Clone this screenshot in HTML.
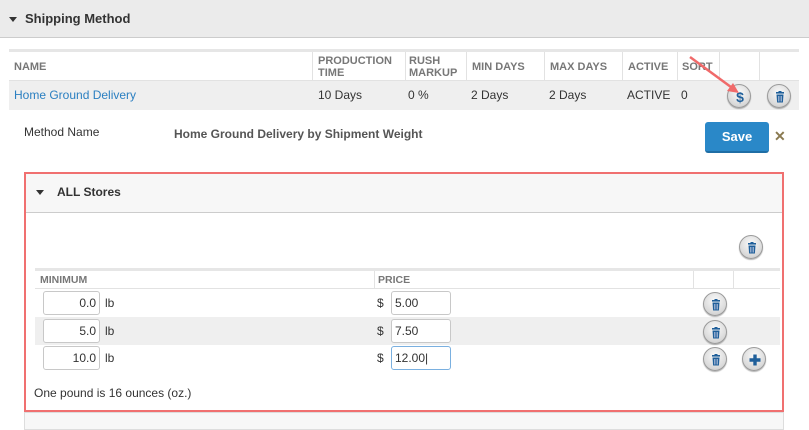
<!DOCTYPE html>
<html><head><meta charset="utf-8"><style>
*{margin:0;padding:0;box-sizing:border-box}
body{width:809px;height:430px;overflow:hidden;background:#fff;font-family:"Liberation Sans",Arial,sans-serif;font-size:12px;color:#333;position:relative}
.a{position:absolute;white-space:nowrap}
.th{font-weight:bold;font-size:11px;color:#777;line-height:12px}
.vl{position:absolute;width:1px;background:#e2e2e2}
.btn{position:absolute;width:24px;height:24px;border-radius:50%;background:radial-gradient(circle at 50% 35%,#fafafa,#d8d8d8 70%,#bcbcbc);border:1px solid #9a9a9a;box-shadow:0 1px 1px rgba(0,0,0,.3)}
.btn svg{position:absolute;left:5px;top:5px}
.inp{position:absolute;height:24px;border:1px solid #c8c8c8;border-radius:3px;background:#fff;font-size:12px;line-height:22px;padding:0 3px;font-family:"Liberation Sans",sans-serif;color:#333}
.tri{position:absolute;width:0;height:0;border-left:4px solid transparent;border-right:4px solid transparent;border-top:5px solid #333}
</style></head><body>
<div class="a" style="left:0;top:0;width:809px;height:38px;background:#ebebeb;border-bottom:1px solid #ccc"></div>
<div class="tri" style="left:9px;top:17px"></div>
<div class="a" style="left:25px;top:11px;font-size:13px;font-weight:bold;color:#333">Shipping Method</div>

<div class="a" style="left:9px;top:49px;width:790px;height:3px;background:#e6e6e6"></div>
<div class="a" style="left:9px;top:80px;width:790px;height:1px;background:#e2e2e2"></div>
<div class="a" style="left:9px;top:81px;width:790px;height:29px;background:#efefef"></div>
<div class="vl" style="left:312px;top:52px;height:29px"></div>
<div class="vl" style="left:405px;top:52px;height:29px"></div>
<div class="vl" style="left:466px;top:52px;height:29px"></div>
<div class="vl" style="left:544px;top:52px;height:29px"></div>
<div class="vl" style="left:622px;top:52px;height:29px"></div>
<div class="vl" style="left:677px;top:52px;height:29px"></div>
<div class="vl" style="left:719px;top:52px;height:29px"></div>
<div class="vl" style="left:759px;top:52px;height:29px"></div>
<div class="a th" style="left:14px;top:61px">NAME</div>
<div class="a th" style="left:318px;top:55px">PRODUCTION<br>TIME</div>
<div class="a th" style="left:409px;top:55px">RUSH<br>MARKUP</div>
<div class="a th" style="left:472px;top:61px">MIN DAYS</div>
<div class="a th" style="left:550px;top:61px">MAX DAYS</div>
<div class="a th" style="left:628px;top:61px">ACTIVE</div>
<div class="a th" style="left:682px;top:61px">SORT</div>
<div class="a" style="left:14px;top:88px;color:#2a7fc1">Home Ground Delivery</div>
<div class="a" style="left:318px;top:88px">10 Days</div>
<div class="a" style="left:408px;top:88px">0 %</div>
<div class="a" style="left:471px;top:88px">2 Days</div>
<div class="a" style="left:549px;top:88px">2 Days</div>
<div class="a" style="left:627px;top:88px">ACTIVE</div>
<div class="a" style="left:681px;top:88px">0</div>
<div class="btn" style="left:727px;top:84px"><svg width="14" height="14"><text x="7" y="12" text-anchor="middle" font-family="Liberation Sans" font-weight="bold" font-size="14" fill="#1f5f9a">$</text></svg></div>
<div class="btn" style="left:767px;top:84px"><svg width="14" height="14" viewBox="0 0 14 14"><rect x="3" y="2" width="8" height="1.6" fill="#1f5f9a"/><rect x="5.5" y="1" width="3" height="1.5" fill="#1f5f9a"/><path d="M3.5 4.5h7l-.6 8h-5.8z" fill="#1f5f9a"/><path d="M5.6 6v5.5M7 6v5.5M8.4 6v5.5" stroke="#dde" stroke-width=".6"/></svg></div>
<svg class="a" style="left:685px;top:52px" width="60" height="50"><line x1="5" y1="5" x2="50" y2="38" stroke="#f06a6a" stroke-width="2.5"/><path d="M54 41l-12-2 6-8z" fill="#f06a6a"/></svg>

<div class="a" style="left:24px;top:125px">Method Name</div>
<div class="a" style="left:174px;top:127px;font-weight:bold;color:#555">Home Ground Delivery by Shipment Weight</div>
<div class="a" style="left:705px;top:122px;width:64px;height:31px;background:#2a88c8;border-radius:3px;border-bottom:2px solid #1f6ea5;color:#fff;font-weight:bold;font-size:13px;text-align:center;line-height:29px">Save</div>
<div class="a" style="left:774px;top:128px;color:#8a7a50;font-weight:bold;font-size:14px">✕</div>

<div class="a" style="left:24px;top:412px;width:760px;height:18px;background:#f7f7f7;border:1px solid #ddd"></div>
<div class="a" style="left:24px;top:172px;width:760px;height:240px;border:2px solid #f07070;background:#fff"></div>
<div class="a" style="left:26px;top:174px;width:756px;height:39px;background:#f7f7f7;border-bottom:1px solid #ccc"></div>
<div class="tri" style="left:36px;top:190px"></div>
<div class="a" style="left:57px;top:185px;font-weight:bold;font-size:12px">ALL Stores</div>
<div class="btn" style="left:739px;top:235px"><svg width="14" height="14" viewBox="0 0 14 14"><rect x="3" y="2" width="8" height="1.6" fill="#1f5f9a"/><rect x="5.5" y="1" width="3" height="1.5" fill="#1f5f9a"/><path d="M3.5 4.5h7l-.6 8h-5.8z" fill="#1f5f9a"/><path d="M5.6 6v5.5M7 6v5.5M8.4 6v5.5" stroke="#dde" stroke-width=".6"/></svg></div>

<div class="a" style="left:35px;top:268px;width:745px;height:3px;background:#e6e6e6"></div>
<div class="a" style="left:35px;top:288px;width:745px;height:1px;background:#e2e2e2"></div>
<div class="vl" style="left:374px;top:271px;height:17px"></div>
<div class="vl" style="left:693px;top:271px;height:17px"></div>
<div class="vl" style="left:733px;top:271px;height:17px"></div>
<div class="a th" style="left:40px;top:274px;font-size:10.5px">MINIMUM</div>
<div class="a th" style="left:378px;top:274px;font-size:10.5px">PRICE</div>
<div class="a" style="left:35px;top:317px;width:745px;height:28px;background:#efefef"></div>

<div class="inp" style="left:43px;top:291px;width:57px;text-align:right">0.0</div>
<div class="a" style="left:105px;top:296px">lb</div>
<div class="a" style="left:377px;top:296px">$</div>
<div class="inp" style="left:391px;top:291px;width:60px">5.00</div>
<div class="btn" style="left:703px;top:292px"><svg width="14" height="14" viewBox="0 0 14 14"><rect x="3" y="2" width="8" height="1.6" fill="#1f5f9a"/><rect x="5.5" y="1" width="3" height="1.5" fill="#1f5f9a"/><path d="M3.5 4.5h7l-.6 8h-5.8z" fill="#1f5f9a"/><path d="M5.6 6v5.5M7 6v5.5M8.4 6v5.5" stroke="#dde" stroke-width=".6"/></svg></div>

<div class="inp" style="left:43px;top:319px;width:57px;text-align:right">5.0</div>
<div class="a" style="left:105px;top:324px">lb</div>
<div class="a" style="left:377px;top:324px">$</div>
<div class="inp" style="left:391px;top:319px;width:60px">7.50</div>
<div class="btn" style="left:703px;top:320px"><svg width="14" height="14" viewBox="0 0 14 14"><rect x="3" y="2" width="8" height="1.6" fill="#1f5f9a"/><rect x="5.5" y="1" width="3" height="1.5" fill="#1f5f9a"/><path d="M3.5 4.5h7l-.6 8h-5.8z" fill="#1f5f9a"/><path d="M5.6 6v5.5M7 6v5.5M8.4 6v5.5" stroke="#dde" stroke-width=".6"/></svg></div>

<div class="inp" style="left:43px;top:346px;width:57px;text-align:right">10.0</div>
<div class="a" style="left:105px;top:351px">lb</div>
<div class="a" style="left:377px;top:351px">$</div>
<div class="inp" style="left:391px;top:346px;width:60px;border-color:#7ab0e0">12.00|</div>
<div class="btn" style="left:703px;top:347px"><svg width="14" height="14" viewBox="0 0 14 14"><rect x="3" y="2" width="8" height="1.6" fill="#1f5f9a"/><rect x="5.5" y="1" width="3" height="1.5" fill="#1f5f9a"/><path d="M3.5 4.5h7l-.6 8h-5.8z" fill="#1f5f9a"/><path d="M5.6 6v5.5M7 6v5.5M8.4 6v5.5" stroke="#dde" stroke-width=".6"/></svg></div>
<div class="btn" style="left:742px;top:347px"><svg width="14" height="14" viewBox="0 0 14 14"><path d="M5.3 1.5h3.4v3.8h3.8v3.4h-3.8v3.8h-3.4v-3.8h-3.8v-3.4h3.8z" fill="#1f5f9a"/></svg></div>

<div class="a" style="left:34px;top:386px">One pound is 16 ounces (oz.)</div>
</body></html>
